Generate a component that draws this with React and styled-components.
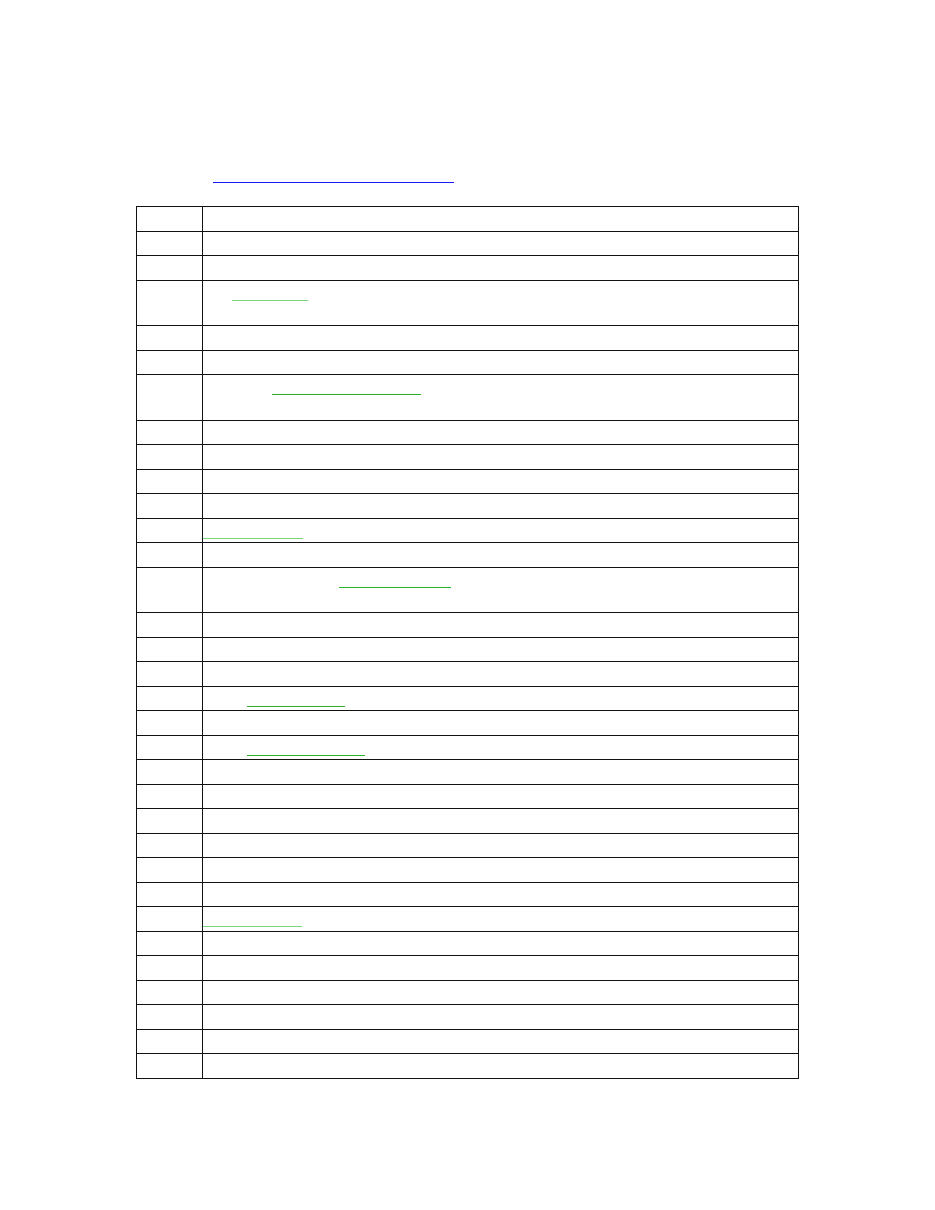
import React from "react";
import styled, { createGlobalStyle } from "styled-components";

const GlobalStyle = createGlobalStyle`
  html, body {
    margin: 0;
    padding: 0;
    background: #ffffff;
    font-family: "Liberation Sans", Arial, sans-serif;
  }
`;

const Page = styled.div`
  padding: 163px 0 0 136px;
  min-height: 1210px;
  box-sizing: border-box;
`;

const HeaderLink = styled.div`
  margin-left: 77px;
  width: 241px;
  height: 19px;
  border-bottom: 1px solid #1a1aff;
`;

const Table = styled.div`
  margin-top: 23px;
  width: 663px;
  box-sizing: border-box;
  border: 1px solid #111;
  display: flex;
  flex-direction: column;
`;

const Row = styled.div`
  display: grid;
  grid-template-columns: 66px 1fr;
  height: ${(p) => (p.$tall ? 45.5 : 24.5)}px;
  box-sizing: border-box;
  border-top: 1px solid #111;

  &:first-child {
    border-top: none;
    height: ${(p) => (p.$tall ? 44.5 : 23.5)}px;
  }
`;

const LabelCell = styled.div`
  border-right: 1px solid #111;
`;

const ContentCell = styled.div`
  position: relative;
`;

const Underline = styled.div`
  margin-left: ${(p) => p.$x}px;
  width: ${(p) => p.$w}px;
  height: 19px;
  border-bottom: 1px solid ${(p) => (p.$light ? "#78d478" : "#2cb02c")};
`;

// rows: tall flag, optional underline (x offset from cell, width, light tone)
const rows = [
  {},
  {},
  {},
  { tall: true, link: { x: 29, w: 76, light: true } },
  {},
  {},
  { tall: true, link: { x: 69, w: 149 } },
  {},
  {},
  {},
  {},
  { link: { x: 0, w: 100, light: true } },
  {},
  { tall: true, link: { x: 136, w: 112 } },
  {},
  {},
  {},
  { link: { x: 44, w: 98 } },
  {},
  { link: { x: 44, w: 118 } },
  {},
  {},
  {},
  {},
  {},
  {},
  { link: { x: 0, w: 99, light: true } },
  {},
  {},
  {},
  {},
  {},
  {},
];

export default function App() {
  return (
    <>
      <GlobalStyle />
      <Page>
        <HeaderLink />
        <Table>
          {rows.map((row, i) => (
            <Row key={i} $tall={row.tall}>
              <LabelCell />
              <ContentCell>
                {row.link && (
                  <Underline
                    $x={row.link.x}
                    $w={row.link.w}
                    $light={row.link.light}
                  />
                )}
              </ContentCell>
            </Row>
          ))}
        </Table>
      </Page>
    </>
  );
}
